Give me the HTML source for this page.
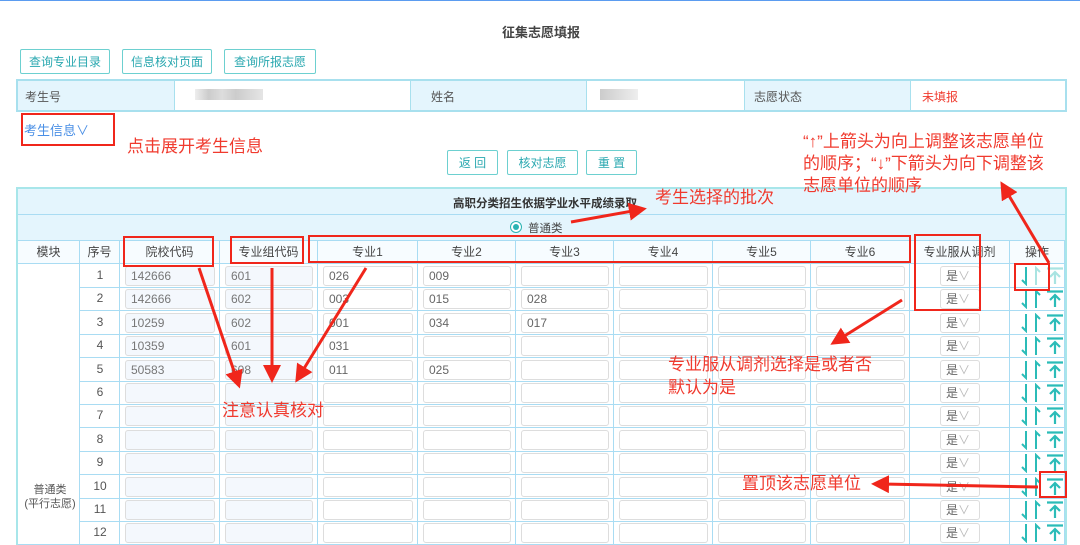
<!DOCTYPE html>
<html style="width:1080px;height:545px;overflow:hidden"><head><meta charset="utf-8">
<style>
*{margin:0;padding:0;box-sizing:border-box}
body{width:1080px;height:545px;overflow:hidden;background:#fff;font-family:"Liberation Sans","Noto Sans CJK SC",sans-serif;font-size:12px;color:#555;position:relative}
.a{position:absolute}
.btn{position:absolute;border:1px solid #6dd0d0;border-radius:2px;color:#2aa8b0;font-size:12px;text-align:center;line-height:24px;background:#fff}
.red{color:#f03a2e;font-size:16px;position:absolute;white-space:nowrap;line-height:22px}
.cell{position:absolute;border-right:1px solid #a9dcf3;border-bottom:1px solid #a9dcf3;text-align:center}
.inp{position:absolute;border:1px solid #ddd;border-radius:3px;background:#fff;font-size:12px;color:#666;padding-left:5px;line-height:18px;text-align:left}
.g{background:#f4f8fd;color:#777}
</style></head><body>
<div class="a" style="left:0;top:0;width:1080px;height:1px;background:#5b9cf0"></div>
<div class="a" style="left:502px;top:22px;font-size:13px;font-weight:bold;color:#444">征集志愿填报</div>
<div class="btn" style="left:20px;top:49px;width:90px;height:25px">查询专业目录</div>
<div class="btn" style="left:122px;top:49px;width:90px;height:25px">信息核对页面</div>
<div class="btn" style="left:224px;top:49px;width:92px;height:25px">查询所报志愿</div>
<div class="a" style="left:16px;top:79px;width:1051px;height:33px;border:2px solid #a8e0ee;background:#fff"></div>
<div class="a" style="left:18px;top:81px;width:157px;height:29px;background:#e4f5fd;border-right:1px solid #a8e0ee"></div>
<div class="a" style="left:410px;top:81px;width:177px;height:29px;background:#e4f5fd;border-left:1px solid #a8e0ee;border-right:1px solid #a8e0ee"></div>
<div class="a" style="left:744px;top:81px;width:167px;height:29px;background:#e4f5fd;border-left:1px solid #a8e0ee;border-right:1px solid #a8e0ee"></div>
<div class="a" style="left:25px;top:88px;color:#555">考生号</div>
<div class="a" style="left:195px;top:89px;width:68px;height:11px;background:linear-gradient(90deg,#eee,#ccc 20%,#ddd 40%,#ccc 60%,#e5e5e5)"></div>
<div class="a" style="left:431px;top:88px">姓名</div>
<div class="a" style="left:600px;top:89px;width:38px;height:11px;background:linear-gradient(90deg,#ccc,#ddd 50%,#eee)"></div>
<div class="a" style="left:754px;top:88px">志愿状态</div>
<div class="a" style="left:922px;top:88px;color:#f03a2e">未填报</div>
<div class="a" style="left:24px;top:120px;color:#4a8fe6;font-size:13px">考生信息∨</div>
<div class="red" style="left:127px;top:136px;font-size:17px">点击展开考生信息</div>
<div class="btn" style="left:447px;top:150px;width:51px;height:25px">返 回</div>
<div class="btn" style="left:507px;top:150px;width:71px;height:25px">核对志愿</div>
<div class="btn" style="left:586px;top:150px;width:51px;height:25px">重 置</div>
<div class="a" style="left:16px;top:187px;width:1051px;height:358px;border:2px solid #a8e6ea;border-bottom:none;background:#fff"></div>
<div class="a" style="left:18px;top:189px;width:1047px;height:51px;background:#e4f5fd"></div>
<div class="a" style="left:18px;top:214px;width:1047px;height:1px;background:#a9dcf3"></div>
<div class="a" style="left:453px;top:195px;font-weight:bold;color:#333;font-size:11.5px">高职分类招生依据学业水平成绩录取</div>
<div class="a" style="left:510px;top:221px;width:12px;height:12px;border:1px solid #2ab3b3;border-radius:50%;background:#fff"><div class="a" style="left:2px;top:2px;width:6px;height:6px;border-radius:50%;background:#2ab3b3"></div></div>
<div class="a" style="left:528px;top:220px;font-size:11.5px;color:#444">普通类</div>
<div id="grid"></div>
<svg class="a" style="left:0;top:0" width="1080" height="545">
<defs><marker id="m" markerWidth="6" markerHeight="6" refX="3" refY="3" orient="auto"><path d="M0,0 L6,3 L0,6 Z" fill="#f0261b"/></marker></defs>
<g fill="none" stroke="#f0261b" stroke-width="2">
<rect x="22" y="114" width="92" height="31"/>
<rect x="124" y="237" width="89" height="29"/>
<rect x="231" y="237" width="72" height="26"/>
<rect x="309" y="236" width="601" height="26"/>
<rect x="915" y="235" width="65" height="75"/>
<rect x="1015" y="264" width="34" height="26"/>
<rect x="1040" y="472" width="26" height="25"/>
</g>
<g stroke="#f0261b" stroke-width="3" marker-end="url(#m)">
<line x1="199" y1="268" x2="237" y2="380"/>
<line x1="272" y1="268" x2="272" y2="374"/>
<line x1="366" y1="268" x2="300" y2="375"/>
<line x1="571" y1="222" x2="638" y2="210"/>
<line x1="902" y1="300" x2="838" y2="340"/>
<line x1="1049" y1="263" x2="1005" y2="189"/>
<line x1="1038" y1="487" x2="880" y2="484"/>
</g>
</svg>
<div class="red" style="left:655px;top:187px;font-size:17px">考生选择的批次</div>
<div class="red" style="left:803px;top:131px;line-height:22px;font-size:17px">“↑”上箭头为向上调整该志愿单位<br>的顺序；“↓”下箭头为向下调整该<br>志愿单位的顺序</div>
<div class="red" style="left:668px;top:353px;line-height:23px;font-size:17px">专业服从调剂选择是或者否<br>默认为是</div>
<div class="red" style="left:222px;top:400px;font-size:17px">注意认真核对</div>
<div class="red" style="left:742px;top:473px;font-size:17px">置顶该志愿单位</div>
<script>
var cols=[18,80,120,220,318,418,516,614,713,811,910,1010,1065];
var hd=["模块","序号","院校代码","专业组代码","专业1","专业2","专业3","专业4","专业5","专业6","专业服从调剂","操作"];
var data=[["142666","601","026","009"],["142666","602","003","015","028"],["10259","602","001","034","017"],["10359","601","031"],["50583","608","011","025"]];
var h="";
h+='<div class="a" style="left:18px;top:240px;width:1047px;height:1px;background:#a9dcf3"></div>';
for(var c=0;c<12;c++){h+='<div class="cell" style="left:'+cols[c]+'px;top:241px;width:'+(cols[c+1]-cols[c])+'px;height:23px;line-height:22px;color:#444;background:#f7fcff">'+hd[c]+'</div>';}
var y0=264,rh=23.4;
h+='<div class="cell" style="left:18px;top:264px;width:62px;height:281px"></div>';
h+='<div class="a" style="left:22px;top:483px;width:56px;text-align:center;font-size:11px;line-height:14px;color:#555">普通类<br>(平行志愿)</div>';
for(var r=0;r<12;r++){var y=y0+r*rh;var d=data[r]||[];
for(var c=1;c<12;c++){var x=cols[c],w=cols[c+1]-cols[c];
h+='<div class="cell" style="left:'+x+'px;top:'+y+'px;width:'+w+'px;height:'+(rh+0.6)+'px"></div>';
if(c==1)h+='<div class="a" style="left:'+x+'px;top:'+(y+4)+'px;width:'+w+'px;text-align:center;color:#555">'+(r+1)+'</div>';
else if(c<10){var v=d[c-2]||"";h+='<div class="inp'+(c<4?' g':'')+'" style="left:'+(x+5)+'px;top:'+(y+2)+'px;width:'+(w-10)+'px;height:20px">'+v+'</div>';}
else if(c==10)h+='<div class="inp" style="left:'+(x+30)+'px;top:'+(y+2)+'px;width:40px;height:20px;color:#666">是<span style="color:#bbb">∨</span></div>';
else{var op=r==0?'opacity:.4':'';
h+='<svg class="a" style="left:'+(x+8)+'px;top:'+(y+2)+'px" width="12" height="20"><path d="M8 1V18L4 14" stroke="#2bbcb8" stroke-width="2" fill="none"/></svg>';
h+='<svg class="a" style="left:'+(x+23)+'px;top:'+(y+2)+'px;'+op+'" width="12" height="20"><path d="M3 19V2L7 6" stroke="#2bbcb8" stroke-width="2" fill="none"/></svg>';
h+='<svg class="a" style="left:'+(x+36)+'px;top:'+(y+3)+'px;'+op+'" width="18" height="18"><path d="M1 1.5H17M9 17V5M4 10L9 5 14 10" stroke="#2bbcb8" stroke-width="2.2" fill="none"/></svg>';}
}}
document.getElementById("grid").innerHTML=h;
</script>
</body></html>
